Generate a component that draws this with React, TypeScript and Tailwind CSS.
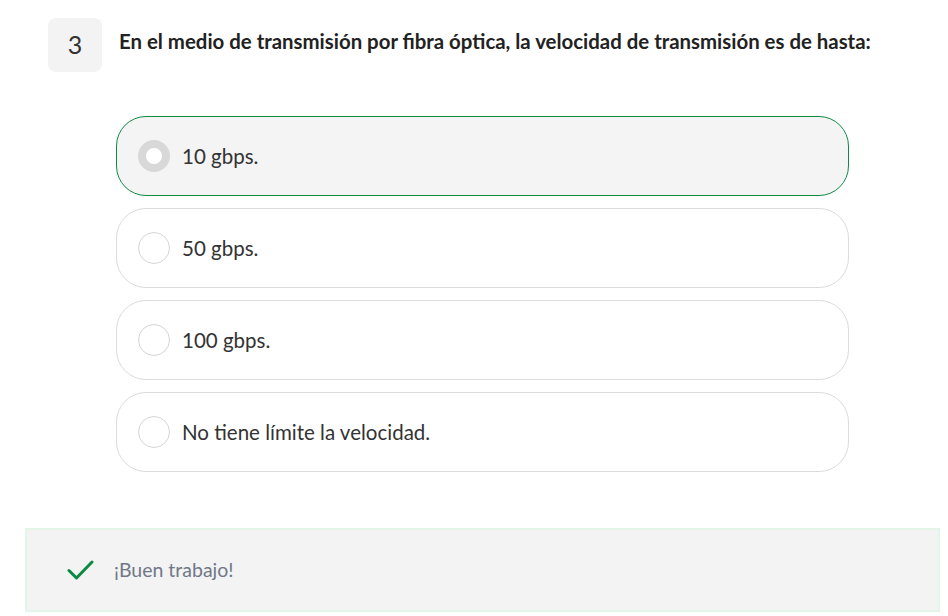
import React from 'react';

const OPTIONS = ['10 gbps.', '50 gbps.', '100 gbps.', 'No tiene límite la velocidad.'];

export default function App() {
  const selected = 0;
  return (
    <div className="w-[948px] h-[616px] bg-white overflow-hidden text-[#333] font-['Lato','Noto_Sans',sans-serif]">
      <div className="flex items-start gap-[17px] pl-[48px] pt-[18px]">
        <div className="w-[54px] h-[54px] rounded-lg bg-[#f3f3f3] flex items-center justify-center text-[25px] text-[#333]">3</div>
        <h2 className="pt-[8px] text-[20.4px] font-bold text-[#222]">
          En el medio de transmisión por fibra óptica, la velocidad de transmisión es de hasta:
        </h2>
      </div>

      <div className="flex flex-col gap-[12px] ml-[116px] mt-[44px] w-[733px]">
        {OPTIONS.map((opt, i) => (
          <label
            key={opt}
            className={
              i === selected
                ? 'h-[80px] rounded-[30px] border border-[#0f8a46] bg-[#f4f4f4] flex items-center pl-[21px] gap-[12px]'
                : 'h-[80px] rounded-[30px] border border-[#dcdcdc] bg-white flex items-center pl-[21px] gap-[12px]'
            }
          >
            {i === selected ? (
              <span className="w-[32px] h-[32px] rounded-full border-[8px] border-[#d8d8d8] bg-white" />
            ) : (
              <span className="w-[32px] h-[32px] rounded-full border border-[#d6d6d6] bg-white" />
            )}
            <span className="text-[20.5px] text-[#333]">{opt}</span>
          </label>
        ))}
      </div>

      <div className="ml-[25px] mt-[56px] w-[915px] h-[84px] bg-[#f3f3f3] border-2 border-[#e3f5e9] flex items-center pl-[40px] gap-[20px]">
        <svg width="27" height="22" viewBox="0 0 27 22" fill="none">
          <path d="M2 11.5 L9.5 19 L25 3" stroke="#0b8a43" strokeWidth="3" strokeLinecap="round" strokeLinejoin="round" />
        </svg>
        <span className="text-[19.5px] text-[#707888]">¡Buen trabajo!</span>
      </div>
    </div>
  );
}
